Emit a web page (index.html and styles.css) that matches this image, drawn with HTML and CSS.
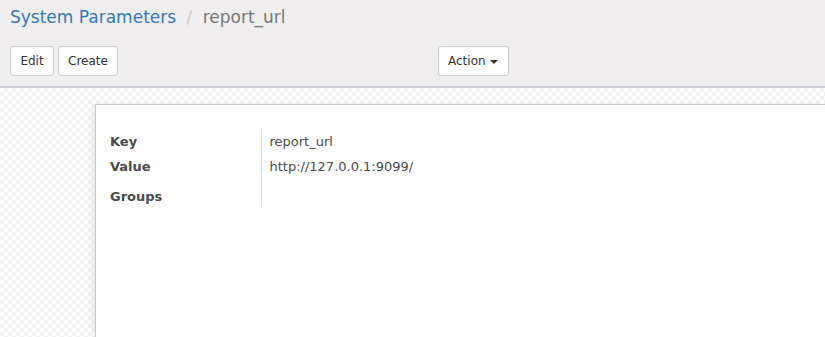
FILE: index.html
```html
<!DOCTYPE html>
<html lang="en">
<head>
    <meta charset="UTF-8">
    <title>System Parameters / report_url</title>
    <link rel="stylesheet" href="styles.css">
</head>
<body>
    <div class="control-panel">
        <div class="breadcrumb">
            <a href="#" class="crumb">System Parameters</a>
            <span class="sep">/</span>
            <span class="current">report_url</span>
        </div>
        <div class="toolbar">
            <div class="buttons">
                <button class="btn btn-edit">Edit</button>
                <button class="btn">Create</button>
            </div>
            <div class="sidebar">
                <button class="btn btn-action">Action <span class="caret"></span></button>
            </div>
        </div>
    </div>
    <div class="form-bg">
        <div class="sheet">
            <table class="group">
                <tr>
                    <td class="label">Key</td>
                    <td class="value">report_url</td>
                </tr>
                <tr>
                    <td class="label">Value</td>
                    <td class="value">http://127.0.0.1:9099/</td>
                </tr>
                <tr class="tall">
                    <td class="label">Groups</td>
                    <td class="value"></td>
                </tr>
            </table>
        </div>
    </div>
</body>
</html>
```

FILE: styles.css
```css
html, body { margin: 0; height: 100%; }
* { box-sizing: border-box; }
body {
    font-family: "DejaVu Sans", "Liberation Sans", sans-serif;
    font-size: 13px;
    color: #4c4c4c;
    display: flex;
    flex-direction: column;
    overflow: hidden;
}
.control-panel {
    background-color: #f0eeee;
    border-bottom: 2px solid #cacad2;
    padding: 6px 10px 10px 10px;
    height: 88px;
    flex-shrink: 0;
}
.breadcrumb { font-size: 17px; line-height: 22px; }
.crumb { color: #337ab7; text-decoration: none; }
.sep { color: #ccc; padding: 0 5px; }
.current { color: #777; }
.toolbar { display: flex; margin-top: 18px; }
.buttons { display: flex; gap: 4px; width: 428px; }
.btn {
    font-family: inherit;
    font-size: 12px;
    color: #333;
    background: #fff;
    border: 1px solid #ccc;
    border-radius: 3px;
    height: 30px;
    padding: 0 9px;
    white-space: nowrap;
}
.btn-edit { width: 44px; }
.btn-action { padding: 0 10px 0 9px; }
.caret {
    display: inline-block;
    width: 0;
    height: 0;
    border-top: 4px solid #333;
    border-left: 4px solid transparent;
    border-right: 4px solid transparent;
    vertical-align: middle;
    margin-left: 1px;
}
.form-bg {
    flex: 1;
    padding: 16px 0 0 95px;
    background-color: #fff;
    background-image: conic-gradient(#f2f2f2 25%, #fff 0 50%, #f2f2f2 0 75%, #fff 0);
    background-size: 8px 8px;
}
.sheet {
    background: #fff;
    height: 100%;
    border-top: 1px solid #c8c8d0;
    border-left: 1px solid #c8c8d0;
    box-shadow: -2px 0 4px rgba(0,0,0,0.08);
    padding: 24px 15px 0 14px;
}
.group { border-collapse: collapse; }
.group td { padding: 0; height: 25px; vertical-align: middle; }
.label { width: 151px; font-weight: bold; }
.value { border-left: 1px solid #ddd; padding-left: 8px !important; color: #4c4c4c; }
.tall td { height: 28px; }
.tall .label { padding-top: 6px; }
```
